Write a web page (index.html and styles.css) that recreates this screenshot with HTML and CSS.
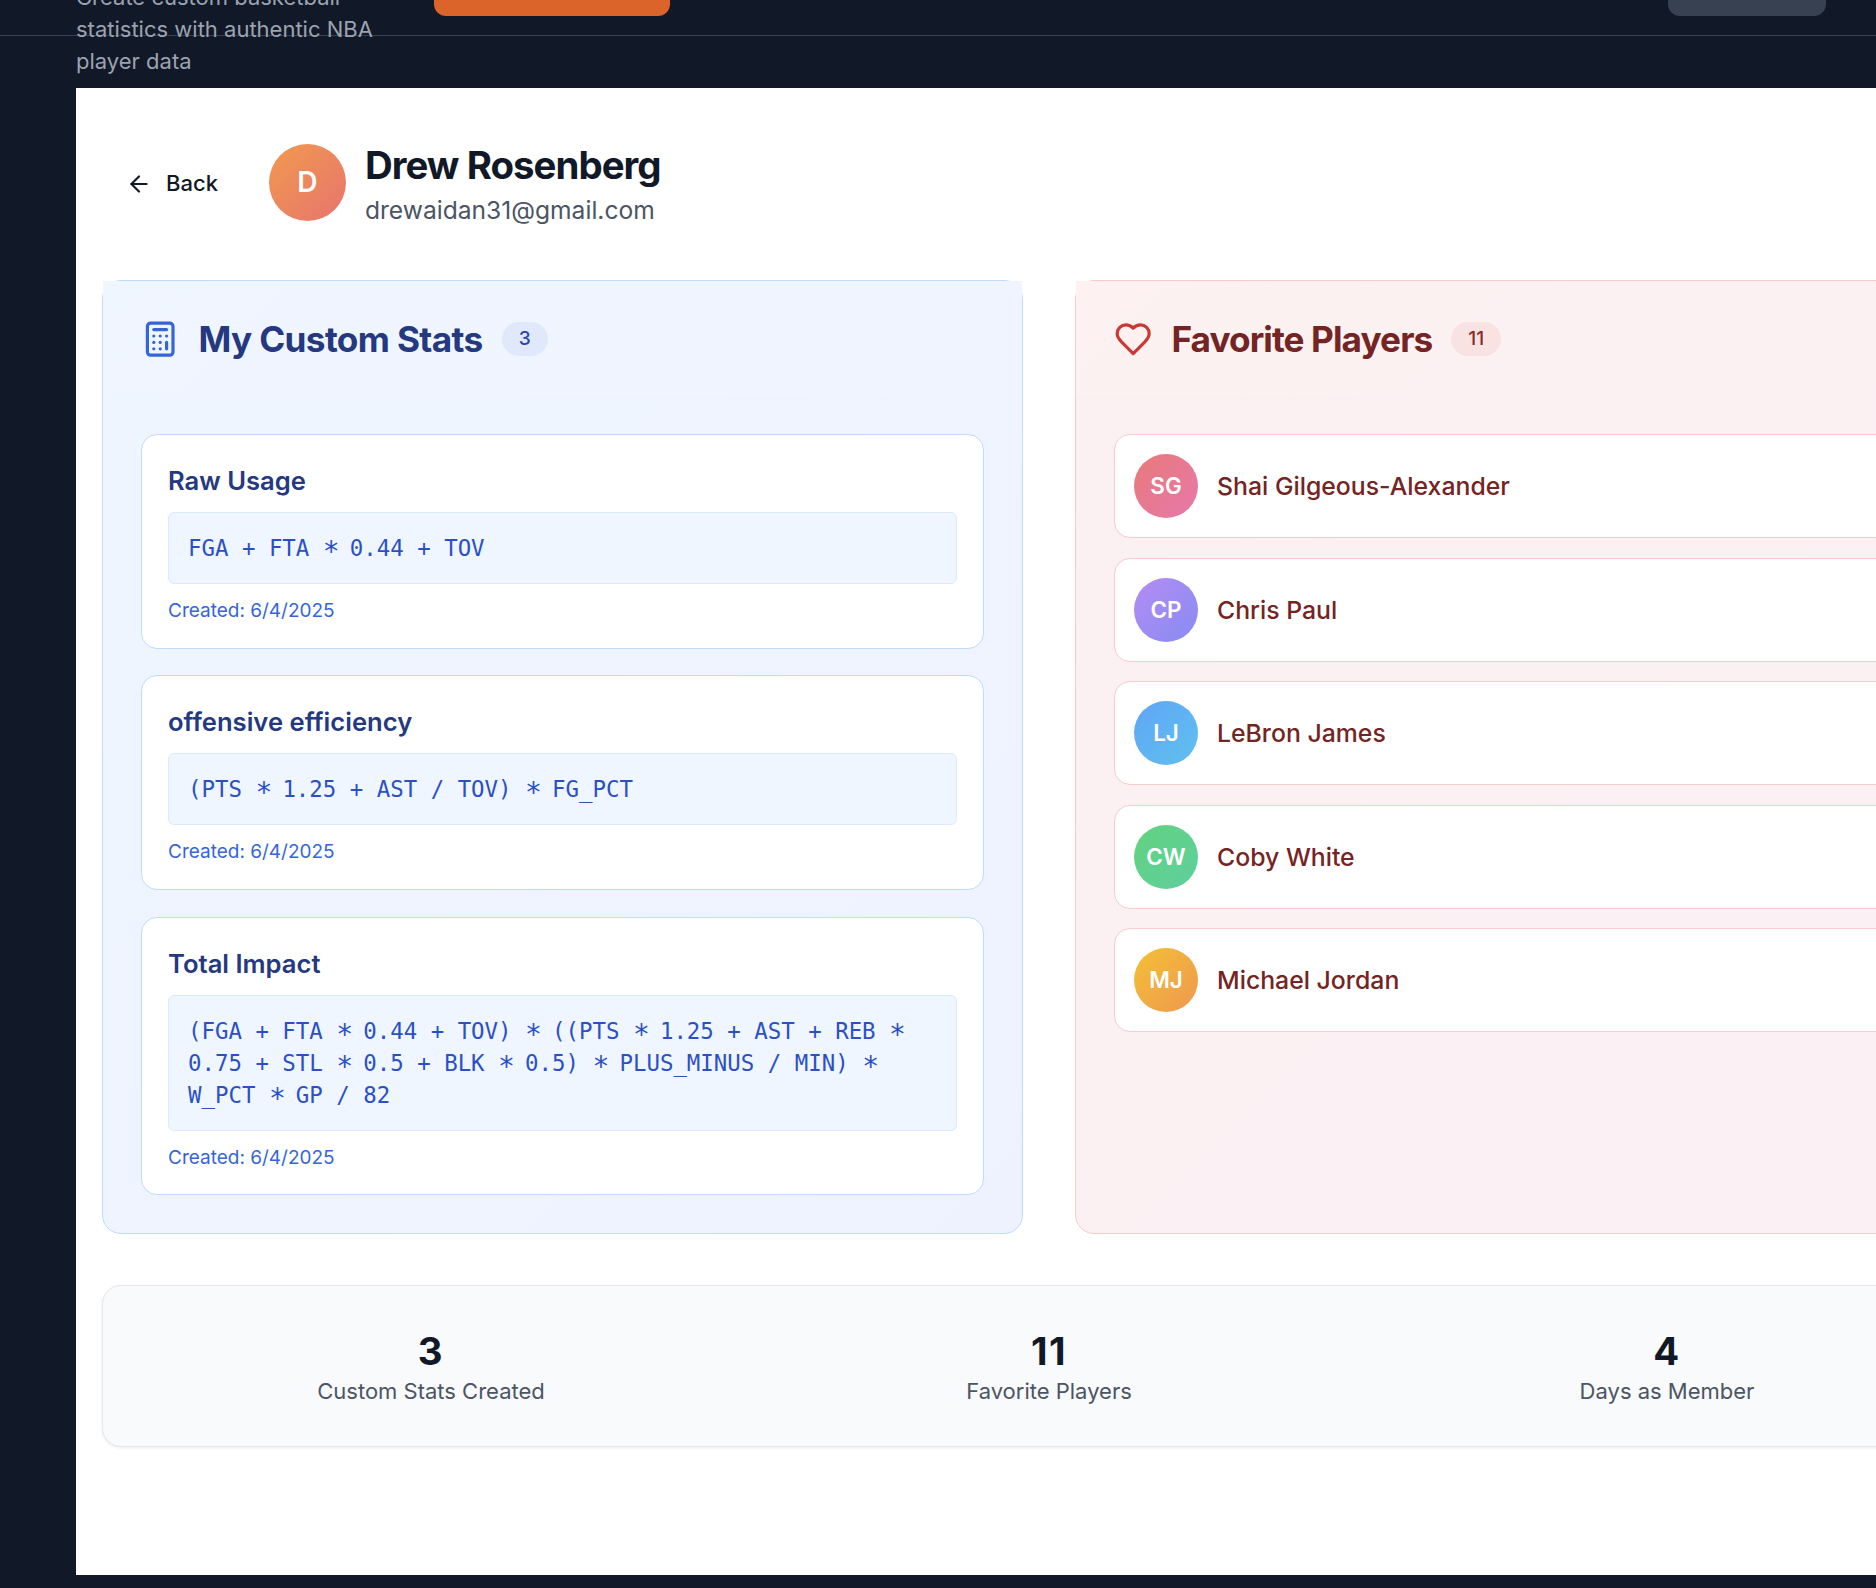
FILE: index.html
```html
<!DOCTYPE html>
<html lang="en">
<head>
  <meta charset="UTF-8">
  <meta name="viewport" content="width=device-width, initial-scale=1.0">
  <title>Drew Rosenberg</title>
  <link rel="stylesheet" href="styles.css">
</head>
<body>
  <div class="topbar">
    <p class="tagline">Create custom basketball statistics with authentic NBA player data</p>
    <button class="btn-orange"></button>
    <button class="btn-grey"></button>
  </div>

  <div class="card-main">
    <div class="profile">
      <a class="back" href="#">
        <svg viewBox="0 0 24 24" class="back-icon"><path d="m12 19-7-7 7-7"/><path d="M19 12H5"/></svg>
        Back
      </a>
      <div class="avatar avatar-big av-d">D</div>
      <div>
        <h1 class="name">Drew Rosenberg</h1>
        <div class="email">drewaidan31@gmail.com</div>
      </div>
    </div>

    <div class="panels">
      <section class="panel panel-blue">
        <div class="panel-head">
          <svg viewBox="0 0 24 24" class="panel-icon"><rect x="4" y="2" width="16" height="20" rx="2"/><line x1="8" x2="16" y1="6" y2="6"/><line x1="16" x2="16" y1="14" y2="18"/><path d="M16 10h.01"/><path d="M12 10h.01"/><path d="M8 10h.01"/><path d="M12 14h.01"/><path d="M8 14h.01"/><path d="M12 18h.01"/><path d="M8 18h.01"/></svg>
          <h2>My Custom Stats</h2>
          <span class="count">3</span>
        </div>
        <div class="panel-body">
          <div class="stat">
            <h3>Raw Usage</h3>
            <div class="formula">FGA + FTA <span class="op">*</span> 0.44 + TOV</div>
            <div class="created">Created: 6/4/2025</div>
          </div>
          <div class="stat">
            <h3>offensive efficiency</h3>
            <div class="formula">(PTS <span class="op">*</span> 1.25 + AST / TOV) <span class="op">*</span> FG_PCT</div>
            <div class="created">Created: 6/4/2025</div>
          </div>
          <div class="stat">
            <h3>Total Impact</h3>
            <div class="formula">(FGA + FTA <span class="op">*</span> 0.44 + TOV) <span class="op">*</span> ((PTS <span class="op">*</span> 1.25 + AST + REB <span class="op">*</span> 0.75 + STL <span class="op">*</span> 0.5 + BLK <span class="op">*</span> 0.5) <span class="op">*</span> PLUS_MINUS / MIN) <span class="op">*</span> W_PCT <span class="op">*</span> GP / 82</div>
            <div class="created">Created: 6/4/2025</div>
          </div>
        </div>
      </section>

      <section class="panel panel-red">
        <div class="panel-head">
          <svg viewBox="0 0 24 24" class="panel-icon"><path d="M19 14c1.49-1.46 3-3.21 3-5.5A5.5 5.5 0 0 0 16.5 3c-1.76 0-3 .5-4.5 2-1.5-1.5-2.74-2-4.5-2A5.5 5.5 0 0 0 2 8.5c0 2.3 1.5 4.05 3 5.5l7 7Z"/></svg>
          <h2>Favorite Players</h2>
          <span class="count">11</span>
        </div>
        <div class="panel-body players">
          <div class="player"><div class="avatar av-sg">SG</div><span>Shai Gilgeous-Alexander</span></div>
          <div class="player"><div class="avatar av-cp">CP</div><span>Chris Paul</span></div>
          <div class="player"><div class="avatar av-lj">LJ</div><span>LeBron James</span></div>
          <div class="player"><div class="avatar av-cw">CW</div><span>Coby White</span></div>
          <div class="player"><div class="avatar av-mj">MJ</div><span>Michael Jordan</span></div>
        </div>
      </section>
    </div>

    <div class="summary">
      <div class="summary-item"><div class="summary-num">3</div><div class="summary-label">Custom Stats Created</div></div>
      <div class="summary-item"><div class="summary-num">11</div><div class="summary-label">Favorite Players</div></div>
      <div class="summary-item"><div class="summary-num">4</div><div class="summary-label">Days as Member</div></div>
    </div>
  </div>
</body>
</html>
```

FILE: styles.css
```css
* {
  margin: 0;
  padding: 0;
  box-sizing: border-box;
}

html,
body {
  height: 100%;
  overflow: hidden;
}

body {
  background-color: #111827;
  font-family: Inter, "Liberation Sans", sans-serif;
  line-height: 1.6;
}

/* top of the page is scrolled off, so the bar starts above the window */
.topbar {
  display: flex;
  align-items: flex-start;
  height: 96px;
  margin-top: -60px;
  padding: 0 50px 0 76px;
  border-bottom: 1px solid #374151;
}

.tagline {
  width: 300px;
  margin-top: 41px;
  font-size: 22px;
  line-height: 32px;
  color: #9ca3af;
}

.btn-orange,
.btn-grey {
  height: 76px;
  border: none;
  border-radius: 12px;
}

.btn-orange {
  width: 236px;
  margin-left: 58px;
  background-color: #db642b;
}

.btn-grey {
  width: 158px;
  margin-left: auto;
  background-color: #374151;
}

.card-main {
  width: 1946px;
  height: 1487px;
  margin: 52px 0 0 76px;
  padding: 49.5px 26px;
  background-color: #fff;
}

.profile {
  display: flex;
  align-items: center;
  margin-bottom: 52px;
}

.back {
  display: flex;
  align-items: center;
  gap: 14px;
  margin-right: 27px;
  padding: 2px 24px 0;
  font-size: 22px;
  font-weight: 500;
  color: #111827;
  text-decoration: none;
}

.back-icon {
  width: 26px;
  height: 26px;
  fill: none;
  stroke: #111827;
  stroke-width: 2;
  stroke-linecap: round;
  stroke-linejoin: round;
}

.avatar {
  display: flex;
  flex-shrink: 0;
  align-items: center;
  justify-content: center;
  width: 64px;
  height: 64px;
  border-radius: 50%;
  font-size: 22.4px;
  font-weight: 600;
  color: #fff;
}

.avatar-big {
  width: 77px;
  height: 77px;
  margin-right: 19px;
  font-size: 28px;
}

.av-d { background: linear-gradient(135deg, #f09a4e, #e8746f); }
.av-sg { background: linear-gradient(135deg, #e87a78, #e678ad); }
.av-cp { background: linear-gradient(135deg, #b48cf4, #878cf2); }
.av-lj { background: linear-gradient(135deg, #60a5f6, #5fc1ee); }
.av-cw { background: linear-gradient(135deg, #62d27f, #5fcf9f); }
.av-mj { background: linear-gradient(135deg, #f4c036, #ee984f); }

.name {
  font-size: 38.4px;
  font-weight: 700;
  line-height: 54px;
  letter-spacing: -0.025em;
  color: #111827;
}

.email {
  font-size: 24.6px;
  line-height: 36px;
  color: #4b5563;
}

.panels {
  display: grid;
  grid-template-columns: 1fr 1fr;
  gap: 52px;
  margin-bottom: 51px;
}

.panel {
  height: 954.5px;
  border: 1px solid;
  border-radius: 19px;
}

.panel-blue {
  border-color: #bfdbfe;
  background: linear-gradient(135deg, #eff6ff, #eef2ff);
  color: #24397f;
}

.panel-red {
  border-color: #f8cccb;
  background: linear-gradient(135deg, #fbf0f1, #fbf0f4);
  color: #742423;
}

/* the head keeps square corners over the panel's round ones */
.panel-head {
  display: flex;
  align-items: center;
  height: 115.5px;
  padding: 1px 38px 0;
}

.panel-blue .panel-head {
  background: linear-gradient(135deg, #f0f6ff, #eff4ff);
}

.panel-red .panel-head {
  background: linear-gradient(135deg, #fdf2f1, #fbf0f3);
}

.panel-icon {
  width: 38.4px;
  height: 38.4px;
  margin-right: 19px;
  fill: none;
  stroke-width: 2;
  stroke-linecap: round;
  stroke-linejoin: round;
}

.panel-blue .panel-icon {
  stroke: #3565d8;
}

.panel-red .panel-icon {
  stroke: #cb3a32;
}

.panel-head h2 {
  font-size: 35.2px;
  font-weight: 700;
  letter-spacing: -0.018em;
}

.panel-red .panel-head h2 {
  letter-spacing: -0.026em;
}

.count {
  display: flex;
  align-items: center;
  justify-content: center;
  height: 34px;
  margin-left: 19px;
  padding: 0 17px;
  border-radius: 17px;
  font-size: 19.2px;
  font-weight: 500;
}

.panel-blue .count {
  background-color: #dfe9fb;
  color: #2a44a8;
}

.panel-red .count {
  background-color: #f8e2e2;
  color: #8c2a26;
}

.panel-body {
  display: flex;
  flex-direction: column;
  gap: 26.4px;
  padding: 38px;
}

.players {
  gap: 19.5px;
}

.stat {
  padding: 27px 26px 21.5px;
  border: 1px solid #bfdbfe;
  border-radius: 16px;
  background-color: #fff;
}

.stat h3 {
  margin-bottom: 12px;
  font-size: 25.6px;
  font-weight: 600;
  line-height: 38px;
}

.formula {
  padding: 19px;
  border: 1px solid #dbeafe;
  border-radius: 6px;
  background-color: #eff6ff;
  font-family: "DejaVu Sans Mono", "Liberation Mono", monospace;
  font-size: 22.4px;
  line-height: 32px;
  color: #2b50c6;
}

/* the multiply sign sits on the middle of the line in the formulas */
.op {
  font-size: 28px;
  line-height: 0;
  vertical-align: -5px;
  letter-spacing: -0.12em;
}

.created {
  margin-top: 12px;
  font-size: 19px;
  color: #3565d8;
}

.player {
  display: flex;
  align-items: center;
  gap: 19px;
  height: 104px;
  padding: 0 19px;
  border: 1px solid #f8cccb;
  border-radius: 16px;
  background-color: #fff;
  font-size: 24.8px;
  font-weight: 500;
}

.player span {
  padding-top: 2px;
}

.summary {
  display: grid;
  grid-template-columns: repeat(3, 1fr);
  gap: 38px;
  height: 161.5px;
  padding: 41px 38px 0;
  border: 1px solid #e5e7eb;
  border-radius: 19px;
  background-color: #f9fafb;
  box-shadow: 0 1px 3px rgba(0, 0, 0, 0.08);
  text-align: center;
}

.summary-num {
  font-size: 38.4px;
  font-weight: 700;
  line-height: 48px;
  letter-spacing: 0.04em;
  color: #111827;
}

.summary-label {
  font-size: 22px;
  line-height: 33px;
  color: #4b5563;
}
```
